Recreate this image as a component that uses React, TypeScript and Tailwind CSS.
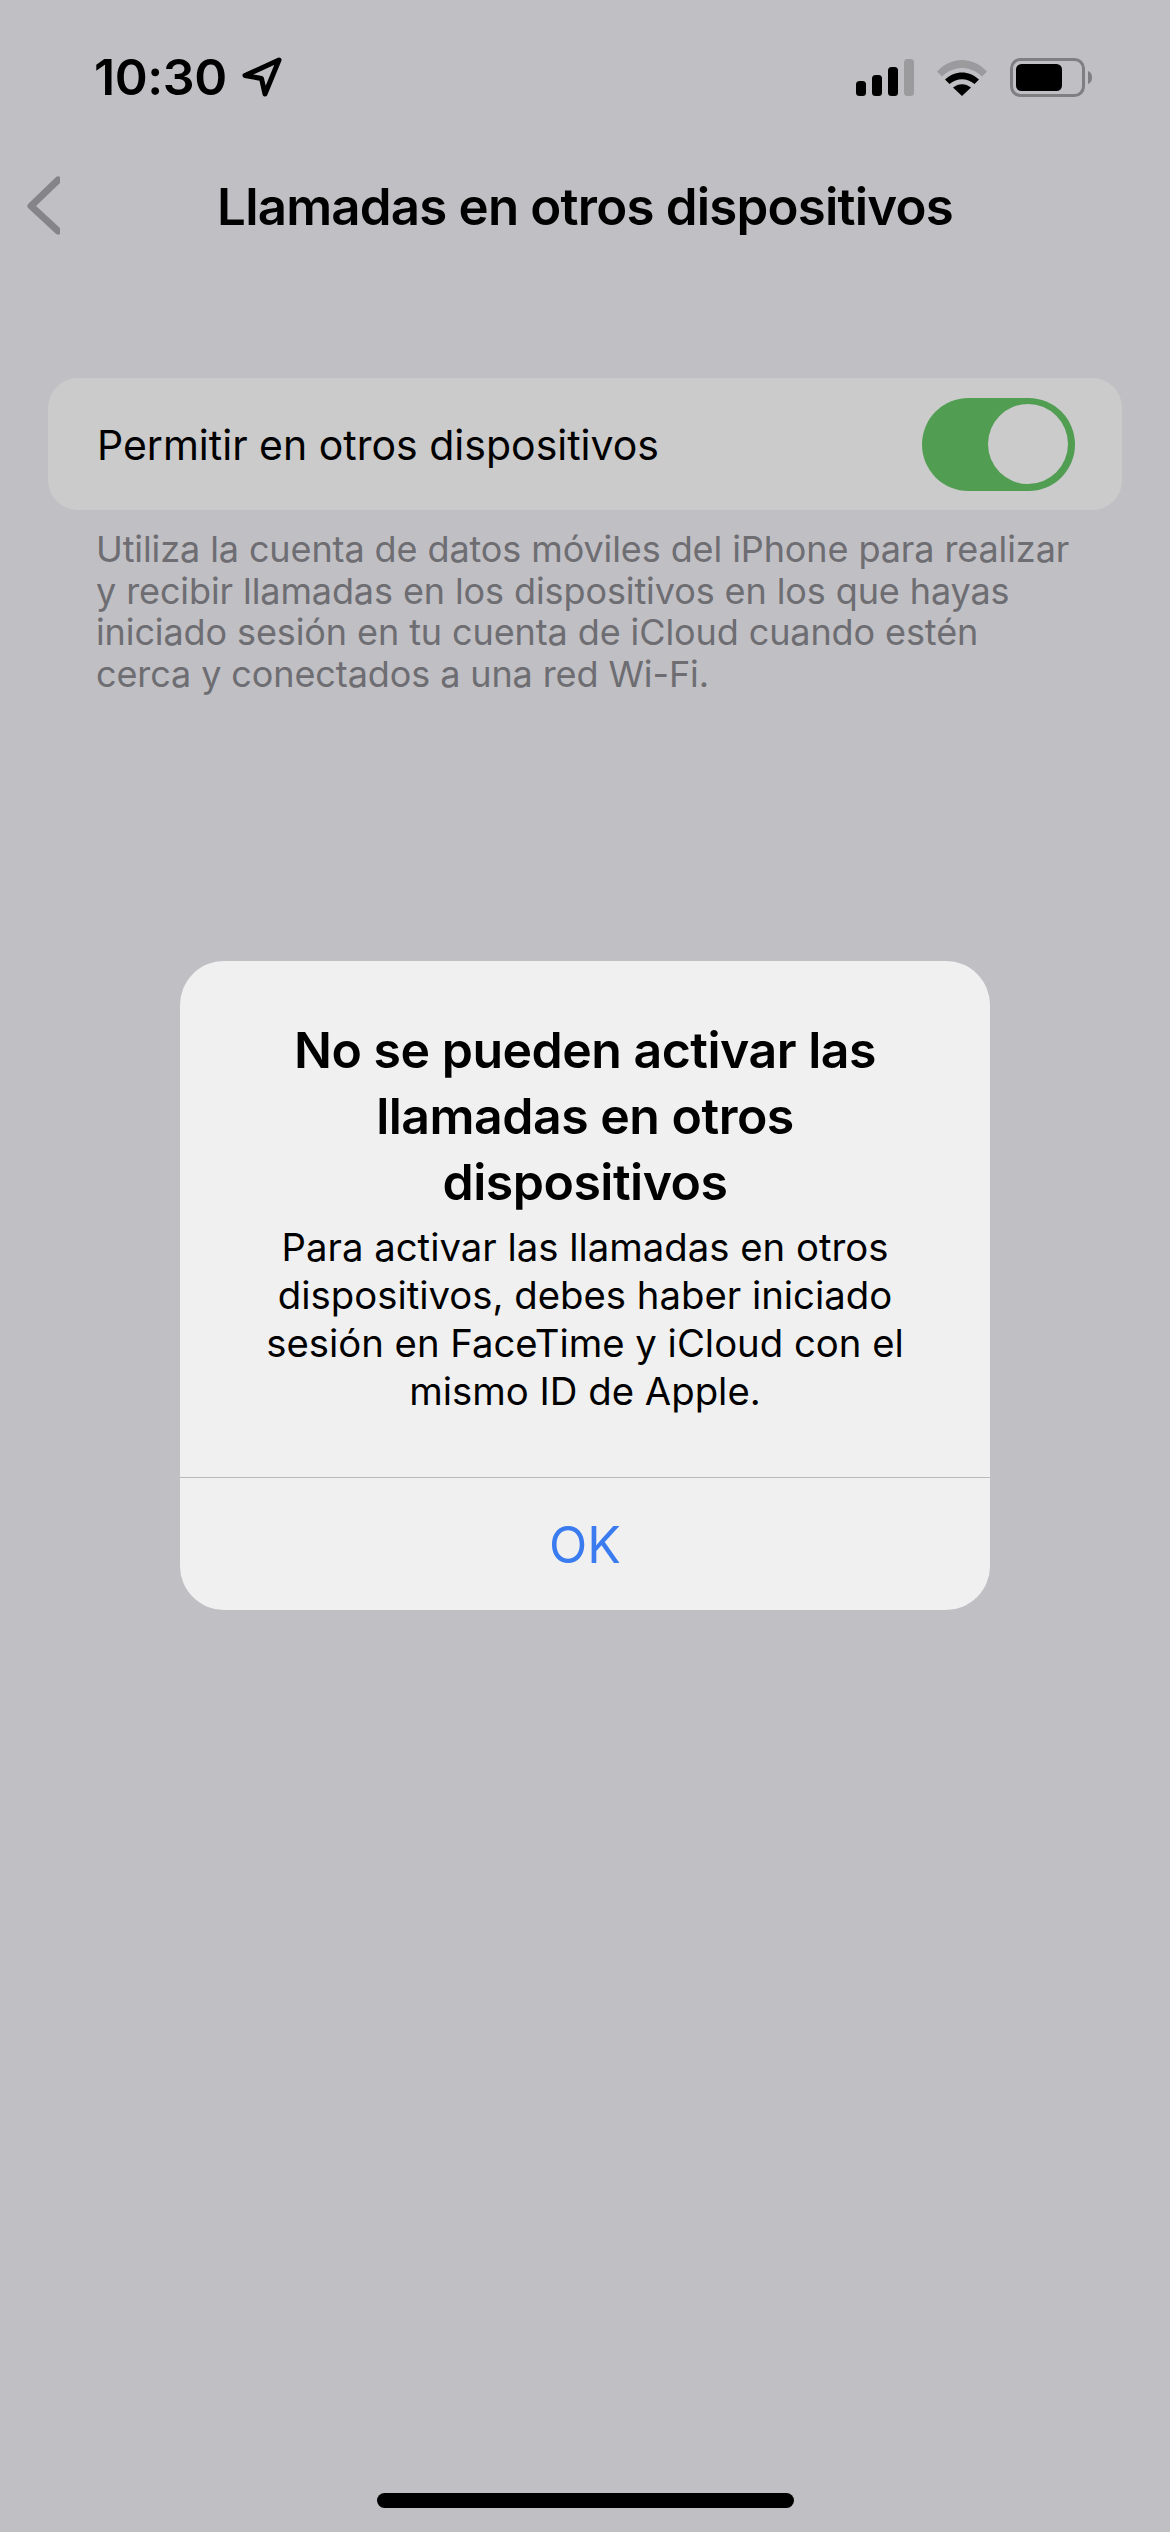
import React from "react";

const font = { fontFamily: "Inter, 'Noto Sans', sans-serif" };

const StatusIcons = () => (
   <div className="flex items-center">
      <svg width="60" height="37" viewBox="0 0 60 37" className="mr-[20px]">
         <rect x="0" y="22" width="10" height="15" rx="3.5" fill="#000" />
         <rect x="16" y="16" width="10" height="21" rx="3.5" fill="#000" />
         <rect x="32" y="8" width="10" height="29" rx="3.5" fill="#000" />
         <rect x="48" y="0" width="10" height="37" rx="3.5" fill="#9b9b9e" />
      </svg>
      <svg width="52" height="37" viewBox="0 0 52 37" className="mr-[22px]">
         <path d="M1 12.5 C15 -3 37 -3 51 12.5 L46 17.5 C34 6 18 6 6 17.5 Z" fill="#9b9b9e" />
         <path d="M9 20.5 C19 11 33 11 43 20.5 L38.500 25 C31 18.500 21 18.500 13.500 25 Z" fill="#000" />
         <path d="M17 28.500 C22.500 24 29.500 24 35 28.500 L26 37 Z" fill="#000" />
      </svg>
      <svg width="82" height="39" viewBox="0 0 82 39">
         <rect x="1.500" y="1.500" width="72" height="36" rx="9" fill="none" stroke="#7f7f82" strokeWidth="3" />
         <rect x="6" y="6" width="46" height="27" rx="5.500" fill="#000" />
         <path d="M78 13 C81 14 82 16.500 82 19.500 C82 22.500 81 25 78 26 Z" fill="#7f7f82" />
      </svg>
   </div>
);

export default function App() {
   return (
      <div className="relative w-[1170px] h-[2532px] overflow-hidden bg-[#c0bfc4] text-black" style={font}>
         <header className="flex items-center justify-between h-[78px] pt-[38px] pl-[94px] pr-[78px] box-content">
            <div className="flex items-center gap-[15px]">
               <span className="text-[50px] leading-none font-semibold tracking-[-0.4px]">10:30</span>
               <svg width="40" height="40" viewBox="0 0 40 40">
                  <path
                     d="M37 3 L3 18.500 L19.500 21.500 L23 37 Z"
                     fill="none"
                     stroke="#000"
                     strokeWidth="5"
                     strokeLinejoin="round"
                  />
               </svg>
            </div>
            <StatusIcons />
         </header>

         <nav className="relative flex items-center justify-center h-[60px] mt-[60px]">
            <svg width="34" height="60" viewBox="0 0 34 60" className="absolute left-[26px] top-0">
               <path d="M32 4 L5 30 L32 55" fill="none" stroke="#858587" strokeWidth="7" strokeLinecap="round" strokeLinejoin="round" />
            </svg>
            <h1 className="text-[51px] leading-none font-semibold tracking-[-0.8px]">Llamadas en otros dispositivos</h1>
         </nav>

         <section className="mt-[142px] mx-[48px]">
            <div className="flex items-center justify-between h-[132px] rounded-[30px] bg-[#cbcbcb] pl-[49px] pr-[47px]">
               <span className="text-[41px] leading-none pt-[2px]">Permitir en otros dispositivos</span>
               <div className="flex items-center justify-end w-[153px] h-[93px] rounded-full bg-[#519e53] pr-[7px]">
                  <div className="w-[80px] h-[80px] rounded-full bg-[#cbcbcb]"></div>
               </div>
            </div>
            <p className="mt-[19px] pl-[48px] text-[36px] leading-[41.500px] tracking-[-0.1px] whitespace-nowrap text-[#6d6d72]">
               Utiliza la cuenta de datos móviles del iPhone para realizar
               <br />y recibir llamadas en los dispositivos en los que hayas
               <br />iniciado sesión en tu cuenta de iCloud cuando estén
               <br />cerca y conectados a una red Wi-Fi.
            </p>
         </section>

         <div className="absolute left-[180px] top-[961px] w-[810px] h-[649px] rounded-[44px] bg-[#f0f0f1] flex flex-col">
            <div className="flex-1 pt-[56px] text-center">
               <h2 className="text-[50px] leading-[66px] font-semibold tracking-[-0.5px]">
                  No se pueden activar las
                  <br />llamadas en otros
                  <br />dispositivos
               </h2>
               <p className="mt-[8px] text-[38.300px] leading-[48px]">
                  Para activar las llamadas en otros
                  <br />dispositivos, debes haber iniciado
                  <br />sesión en FaceTime y iCloud con el
                  <br />mismo ID de Apple.
               </p>
            </div>
            <div className="flex items-center justify-center h-[133px] pt-[2px] border-t border-[#b9b9bc] text-[50px] text-[#3a7cf0]">
               OK
            </div>
         </div>

         <div className="absolute left-[377px] top-[2493px] w-[417px] h-[15px] rounded-full bg-black"></div>
      </div>
   );
}
